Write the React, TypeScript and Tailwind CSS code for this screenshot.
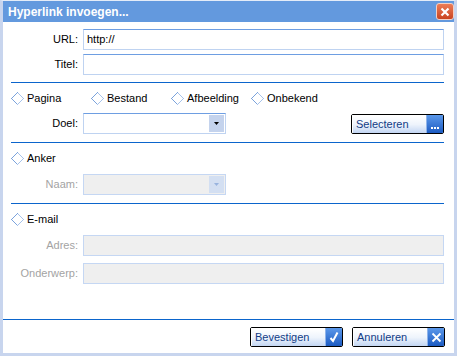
import React from "react";

function Diamond() {
  return (
    <svg width="13" height="13" viewBox="0 0 13 13" className="shrink-0 block" shapeRendering="crispEdges">
      <polygon points="6.5,0.5 12.5,6.5 6.5,12.5 0.5,6.5" fill="#ffffff" stroke="#a6c2ea" strokeWidth="1" />
      <polyline points="6.5,0.5 0.5,6.5 6.5,12.5" fill="none" stroke="#7aa2dc" strokeWidth="1" />
    </svg>
  );
}

function Radio({ label }: { label: string }) {
  return (
    <div className="w-[80px] flex items-center gap-[3px]">
      <Diamond />
      <span>{label}</span>
    </div>
  );
}

function Label({ text, disabled }: { text: string; disabled?: boolean }) {
  return (
    <div className={`w-[67px] mr-[5px] text-right shrink-0 ${disabled ? "text-[#a3a3a3]" : "text-black"}`}>
      {text}
    </div>
  );
}

function TextInput({ value, disabled }: { value?: string; disabled?: boolean }) {
  return (
    <div
      className={`flex-1 h-[21px] flex items-center pl-[3px] border ${
        disabled
          ? "bg-[#efefef] border-[#c5d7f3]"
          : "bg-white border-[#bfd3f1] border-t-[#6e9ee2]"
      }`}
    >
      {value}
    </div>
  );
}

function Arrow({ color }: { color: string }) {
  return (
    <svg width="5" height="3" viewBox="0 0 5 3">
      <polygon points="0,0 5,0 2.5,3" fill={color} />
    </svg>
  );
}

function Select({ disabled }: { disabled?: boolean }) {
  return (
    <div
      className={`w-[143px] h-[21px] flex border p-px ${
        disabled ? "bg-[#efefef] border-[#c5d7f3]" : "bg-white border-[#bfd3f1] border-t-[#6e9ee2]"
      }`}
    >
      <div className="flex-1" />
      <div
        className={`w-[15px] flex items-center justify-center ${
          disabled ? "bg-[#d3dff2]" : "bg-[#c4d3ed]"
        }`}
      >
        <Arrow color={disabled ? "#98b3de" : "#000000"} />
      </div>
    </div>
  );
}

function XpButton({ label, icon }: { label: string; icon: React.ReactNode }) {
  return (
    <div className="w-[93px] h-[20px] border border-black rounded-[2px] flex overflow-hidden">
      <div className="flex-1 flex items-center pl-[3px] border-t border-l border-white bg-linear-to-b from-white via-[#eef4fc] to-[#c3d6f3] text-[#123c86]">
        {label}
      </div>
      <div className="w-[17px] bg-linear-to-b from-[#5b98ea] to-[#1c5bc2] flex items-center justify-center border-l border-[#8fb4ea]">
        {icon}
      </div>
    </div>
  );
}

function Dots() {
  return (
    <div className="flex gap-[1px] self-end mb-[4px]">
      <div className="w-[2px] h-[2px] bg-white" />
      <div className="w-[2px] h-[2px] bg-white" />
      <div className="w-[2px] h-[2px] bg-white" />
    </div>
  );
}

function Check() {
  return (
    <svg width="12" height="12" viewBox="0 0 12 12">
      <path d="M2.5 7 L5 10 L9.5 1.5" stroke="white" strokeWidth="2" fill="none" />
    </svg>
  );
}

function Cross() {
  return (
    <svg width="11" height="11" viewBox="0 0 11 11">
      <path d="M1.5 1.5 L9.5 9.5 M9.5 1.5 L1.5 9.5" stroke="white" strokeWidth="1.8" fill="none" />
    </svg>
  );
}

function Sep() {
  return <div className="h-px bg-[#0b65cc]" />;
}

export default function App() {
  return (
    <div className="w-[457px] h-[356px] bg-white flex flex-col border-x-[3px] border-b-[3px] border-t border-x-[#c8d5ee] border-b-[#c8d5ee] border-t-[#e4ecf8] font-['Liberation_Sans',Arial,sans-serif] text-[11px] text-black leading-none">
      <div className="h-[21px] bg-[#6399de] flex items-center justify-between pl-[5px]">
        <span className="text-white font-bold text-[12px]">Hyperlink invoegen...</span>
        <div className="w-[18px] h-[17px] rounded-[3px] border border-[#f3d0c4] bg-linear-to-b from-[#ec7c57] to-[#c9431f] flex items-center justify-center">
          <svg width="10" height="10" viewBox="0 0 10 10">
            <path d="M1.5 1.5 L8.5 8.5 M8.5 1.5 L1.5 8.5" stroke="white" strokeWidth="2.2" fill="none" />
          </svg>
        </div>
      </div>

      <div className="flex-1 flex flex-col pl-[8px] pr-[10px] pt-[7px]">
        <div className="flex items-center">
          <Label text="URL:" />
          <TextInput value="http://" />
        </div>
        <div className="flex items-center mt-[4px]">
          <Label text="Titel:" />
          <TextInput />
        </div>

        <div className="mt-[7px]">
          <Sep />
        </div>

        <div className="flex items-center h-[17px] mt-[7px]">
          <Radio label="Pagina" />
          <Radio label="Bestand" />
          <Radio label="Afbeelding" />
          <Radio label="Onbekend" />
        </div>

        <div className="flex items-center mt-[6px]">
          <Label text="Doel:" />
          <Select />
          <div className="flex-1" />
          <XpButton label="Selecteren" icon={<Dots />} />
        </div>

        <div className="mt-[8px]">
          <Sep />
        </div>

        <div className="flex items-center h-[17px] mt-[7px]">
          <Radio label="Anker" />
        </div>

        <div className="flex items-center mt-[7px]">
          <Label text="Naam:" disabled />
          <Select disabled />
        </div>

        <div className="mt-[8px]">
          <Sep />
        </div>

        <div className="flex items-center h-[17px] mt-[7px]">
          <Radio label="E-mail" />
        </div>

        <div className="flex items-center mt-[7px]">
          <Label text="Adres:" disabled />
          <TextInput disabled />
        </div>
        <div className="flex items-center mt-[7px]">
          <Label text="Onderwerp:" disabled />
          <TextInput disabled />
        </div>
      </div>

      <Sep />
      <div className="h-[33px] flex items-start justify-end pt-[7px] pr-[9px] gap-[9px]">
        <XpButton label="Bevestigen" icon={<Check />} />
        <XpButton label="Annuleren" icon={<Cross />} />
      </div>
    </div>
  );
}
